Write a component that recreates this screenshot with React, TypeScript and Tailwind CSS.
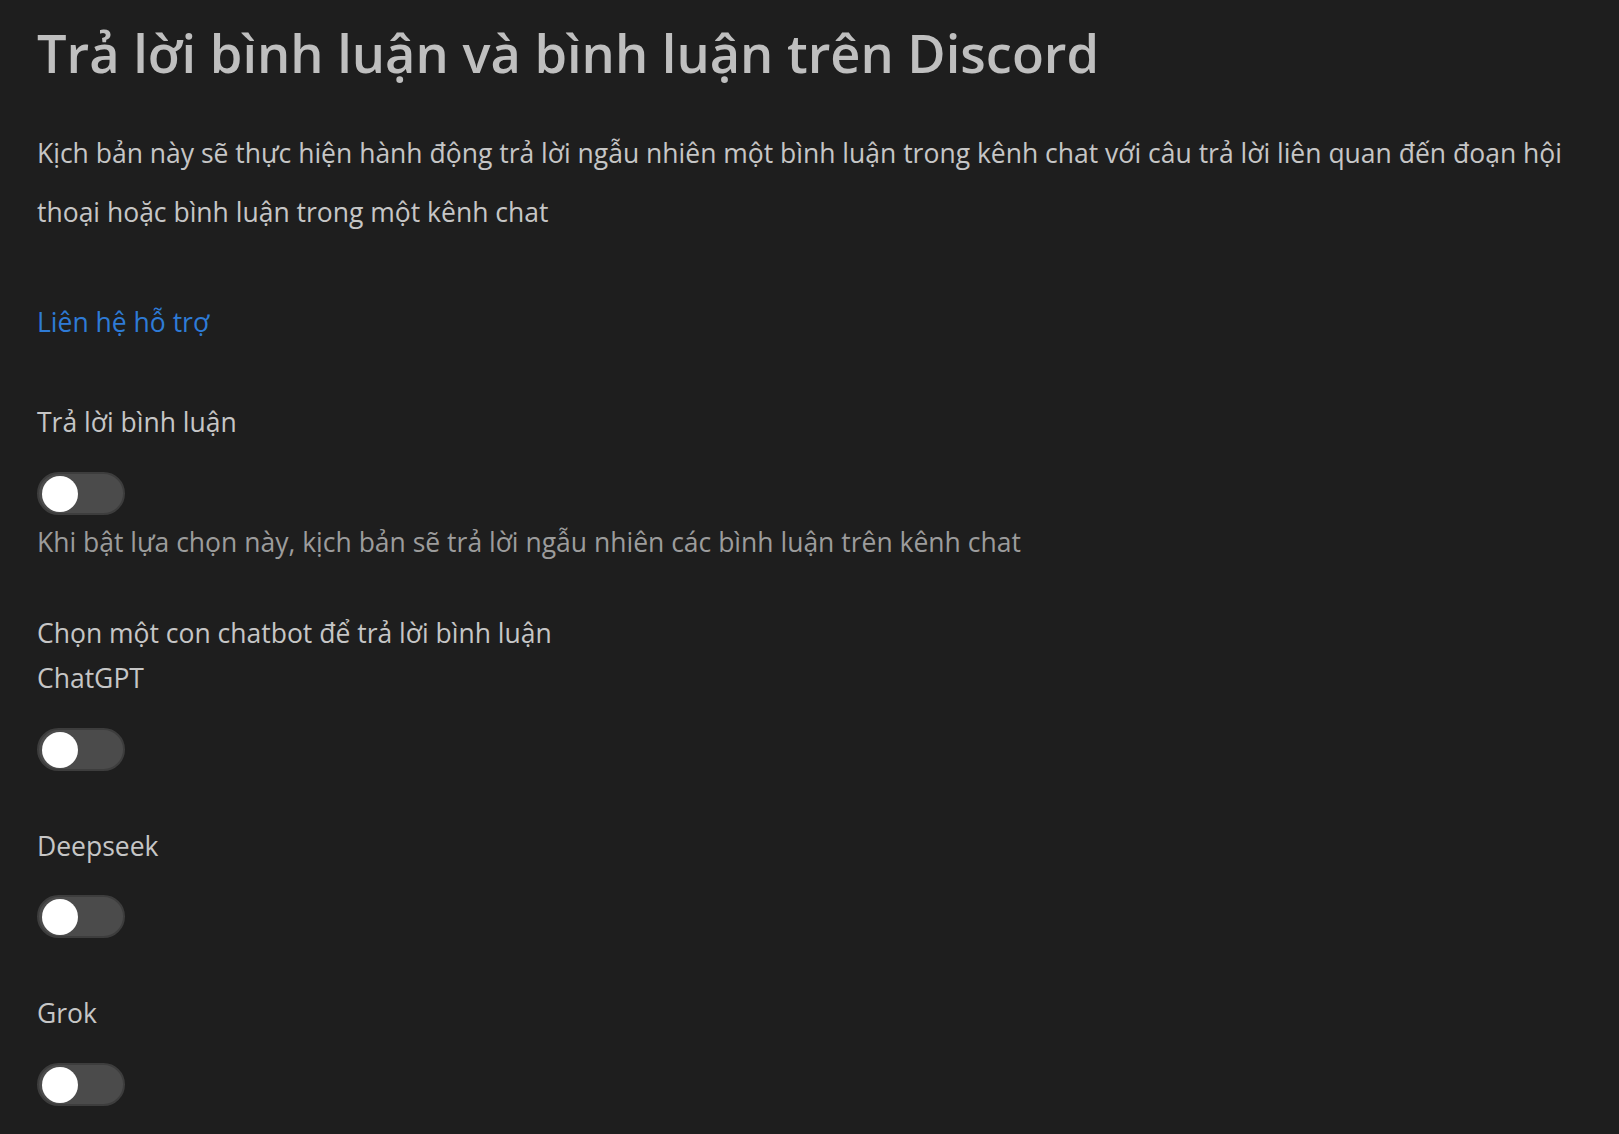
import React from "react";

function Toggle() {
  return (
    <div className="w-[88px] h-[43px] rounded-full bg-[#4b4b4b] border-[2px] border-[#3d3d3d] flex items-center pl-[3px]">
      <div className="w-[36px] h-[36px] rounded-full bg-white" />
    </div>
  );
}

export default function App() {
  return (
    <div
      className="min-h-screen bg-[#1e1e1e] px-[37px] pb-[30px]"
      style={{ fontFamily: '"Open Sans", "Noto Sans", sans-serif' }}
    >
      <h1 className="pt-[21px] text-[52.4px] leading-[64px] font-semibold text-[#bfbfbf]">
        Trả lời bình luận và bình luận trên Discord
      </h1>
      <p className="mt-[39px] text-[26.5px] leading-[59px] text-[#c6c6c6]">
        Kịch bản này sẽ thực hiện hành động trả lời ngẫu nhiên một bình luận trong kênh chat với câu trả lời liên quan đến đoạn hội thoại hoặc bình luận trong một kênh chat
      </p>
      <div className="mt-[62px] text-[26.5px] leading-[36px]">
        <a className="text-[#2e7bd6]">Liên hệ hỗ trợ</a>
      </div>
      <div className="mt-[64px] text-[26.5px] leading-[36px] text-[#c6c6c6]">Trả lời bình luận</div>
      <div className="mt-[32px]">
        <Toggle />
      </div>
      <div className="mt-[9px] text-[26.5px] leading-[36px] text-[#9c9c9c]">
        Khi bật lựa chọn này, kịch bản sẽ trả lời ngẫu nhiên các bình luận trên kênh chat
      </div>
      <div className="mt-[55px] text-[26.5px] leading-[36px] text-[#c6c6c6]">Chọn một con chatbot để trả lời bình luận</div>
      <div className="mt-[9px] text-[26.5px] leading-[36px] text-[#c6c6c6]">ChatGPT</div>
      <div className="mt-[32px]">
        <Toggle />
      </div>
      <div className="mt-[57px] text-[26.5px] leading-[36px] text-[#c6c6c6]">Deepseek</div>
      <div className="mt-[31px]">
        <Toggle />
      </div>
      <div className="mt-[57px] text-[26.5px] leading-[36px] text-[#c6c6c6]">Grok</div>
      <div className="mt-[32px]">
        <Toggle />
      </div>
    </div>
  );
}
